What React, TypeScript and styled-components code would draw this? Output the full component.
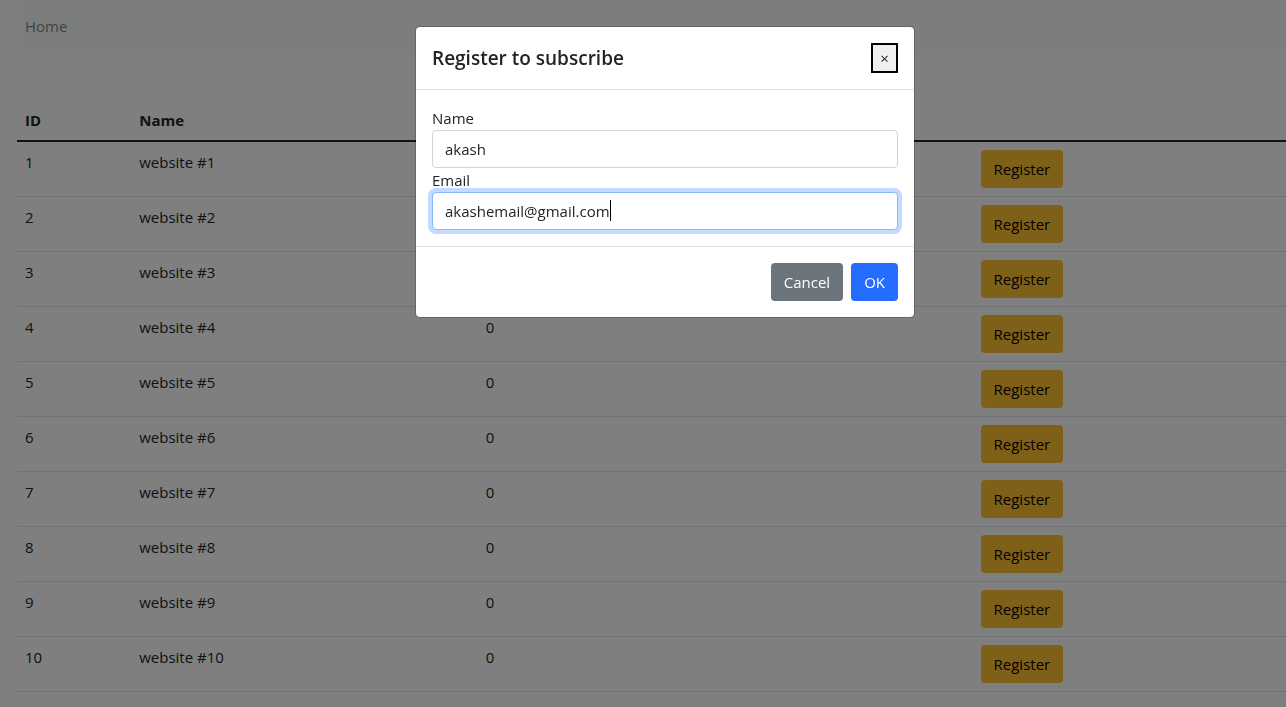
import React, { useLayoutEffect, useRef, useState } from "react";
import styled, { createGlobalStyle } from "styled-components";

const GlobalStyle = createGlobalStyle`
  *, *::before, *::after { box-sizing: border-box; }
  body {
    margin: 0;
    background: #fff;
    color: #212529;
    font-family: "Segoe UI", "Open Sans", "Noto Sans", sans-serif;
    font-size: 15px;
    line-height: 24px;
    overflow: hidden;
  }
  button, input { font: inherit; }
`;

const Page = styled.div`
  padding-left: 17px;
`;

const Nav = styled.nav`
  padding: 14px 8px 16px;
  margin-bottom: 46px;
  background: #f8fcfa;
`;

const NavLink = styled.a`
  color: rgba(0, 0, 0, 0.5);
  text-decoration: none;
`;

const Table = styled.table`
  width: 100%;
  table-layout: fixed;
  border-collapse: separate;
  border-spacing: 0;
`;

const HeadCell = styled.th<{ $width?: string }>`
  width: ${(p) => p.$width ?? "auto"};
  height: 42px;
  padding: 8px;
  border-bottom: 2px solid #212529;
  font-weight: 700;
  text-align: left;
`;

const Cell = styled.td`
  padding: 8px;
  border-bottom: 1px solid #dee2e6;
  vertical-align: top;
`;

const tones = {
  warning: { background: "#ffc130", color: "#000" },
  secondary: { background: "#6c757d", color: "#fff" },
  primary: { background: "#246dfe", color: "#fff" },
};

const Button = styled.button<{ $tone: keyof typeof tones }>`
  display: block;
  height: 38px;
  padding: 6px 13px;
  border: 0;
  border-radius: 4px;
  background: ${(p) => tones[p.$tone].background};
  color: ${(p) => tones[p.$tone].color};
  cursor: pointer;
`;

const Backdrop = styled.div`
  position: fixed;
  inset: 0;
  padding: 26px 0 26px 44px;
  background: rgba(0, 0, 0, 0.5);
`;

const Dialog = styled.div`
  max-width: 500px;
  margin: 0 auto;
  border: 1px solid rgba(0, 0, 0, 0.2);
  border-radius: 5px;
  background: #fff;
  background-clip: padding-box;
`;

const DialogHeader = styled.header`
  display: flex;
  align-items: center;
  justify-content: space-between;
  padding: 16px;
  border-bottom: 1px solid #dee2e6;
`;

const DialogTitle = styled.h5`
  margin: 0;
  font-size: 19px;
  font-weight: 600;
  line-height: 30px;
`;

const CloseButton = styled.button`
  width: 27px;
  height: 30px;
  padding: 0;
  border: 2px solid #000;
  background: #efefef;
  color: #212529;
  font-size: 15px;
  line-height: 26px;
`;

const DialogBody = styled.div`
  padding: 16px;
`;

const Label = styled.label`
  display: block;
`;

const Field = styled.div`
  position: relative;
`;

const Input = styled.input<{ $active?: boolean }>`
  display: block;
  width: 100%;
  height: 38px;
  padding: 6px 12px;
  border: 1px solid ${(p) => (p.$active ? "#86b7fe" : "#ced4da")};
  border-radius: 4px;
  outline: 0;
  background: #fff;
  color: #212529;
  caret-color: transparent;
  box-shadow: ${(p) => (p.$active ? "0 0 0 4px rgba(13, 110, 253, 0.25)" : "none")};
`;

const Caret = styled.span`
  position: absolute;
  top: 8px;
  width: 1px;
  height: 21px;
  background: #000;
`;

const DialogFooter = styled.footer`
  display: flex;
  justify-content: flex-end;
  gap: 8px;
  padding: 16px;
  border-top: 1px solid #dee2e6;
`;

type TextFieldProps = {
  id: string;
  label: string;
  type: string;
  initial: string;
  active?: boolean;
};

function TextField({ id, label, type, initial, active }: TextFieldProps) {
  const [value, setValue] = useState(initial);
  const [caretX, setCaretX] = useState(0);
  const ref = useRef<HTMLInputElement>(null);

  // Keep the caret at the end of the typed text.
  useLayoutEffect(() => {
    const context = document.createElement("canvas").getContext("2d");
    if (!ref.current || !context) return;
    const style = getComputedStyle(ref.current);
    context.font = `${style.fontSize} ${style.fontFamily}`;
    setCaretX(Math.round(context.measureText(value).width) + 13);
  }, [value]);

  return (
    <>
      <Label htmlFor={id}>{label}</Label>
      <Field>
        <Input
          id={id}
          ref={ref}
          type={type}
          value={value}
          $active={active}
          onChange={(e) => setValue(e.target.value)}
        />
        {active && <Caret style={{ left: caretX }} />}
      </Field>
    </>
  );
}

const websites = Array.from({ length: 10 }, (_, i) => ({
  id: i + 1,
  name: `website #${i + 1}`,
  count: 0,
}));

export default function App() {
  return (
    <>
      <GlobalStyle />
      <Page>
        <Nav>
          <NavLink href="#">Home</NavLink>
        </Nav>
        <Table>
          <thead>
            <tr>
              <HeadCell $width="9%">ID</HeadCell>
              <HeadCell $width="27.3%">Name</HeadCell>
              <HeadCell $width="39%" />
              <HeadCell />
            </tr>
          </thead>
          <tbody>
            {websites.map((site) => (
              <tr key={site.id}>
                <Cell>{site.id}</Cell>
                <Cell>{site.name}</Cell>
                <Cell>{site.count}</Cell>
                <Cell>
                  <Button type="button" $tone="warning">Register</Button>
                </Cell>
              </tr>
            ))}
          </tbody>
        </Table>
      </Page>
      <Backdrop>
        <Dialog role="dialog" aria-modal="true" aria-labelledby="dialog-title">
          <DialogHeader>
            <DialogTitle id="dialog-title">Register to subscribe</DialogTitle>
            <CloseButton type="button">×</CloseButton>
          </DialogHeader>
          <DialogBody>
            <TextField id="name" label="Name" type="text" initial="akash" />
            <TextField id="email" label="Email" type="email" initial="akashemail@gmail.com" active />
          </DialogBody>
          <DialogFooter>
            <Button type="button" $tone="secondary">Cancel</Button>
            <Button type="button" $tone="primary">OK</Button>
          </DialogFooter>
        </Dialog>
      </Backdrop>
    </>
  );
}
